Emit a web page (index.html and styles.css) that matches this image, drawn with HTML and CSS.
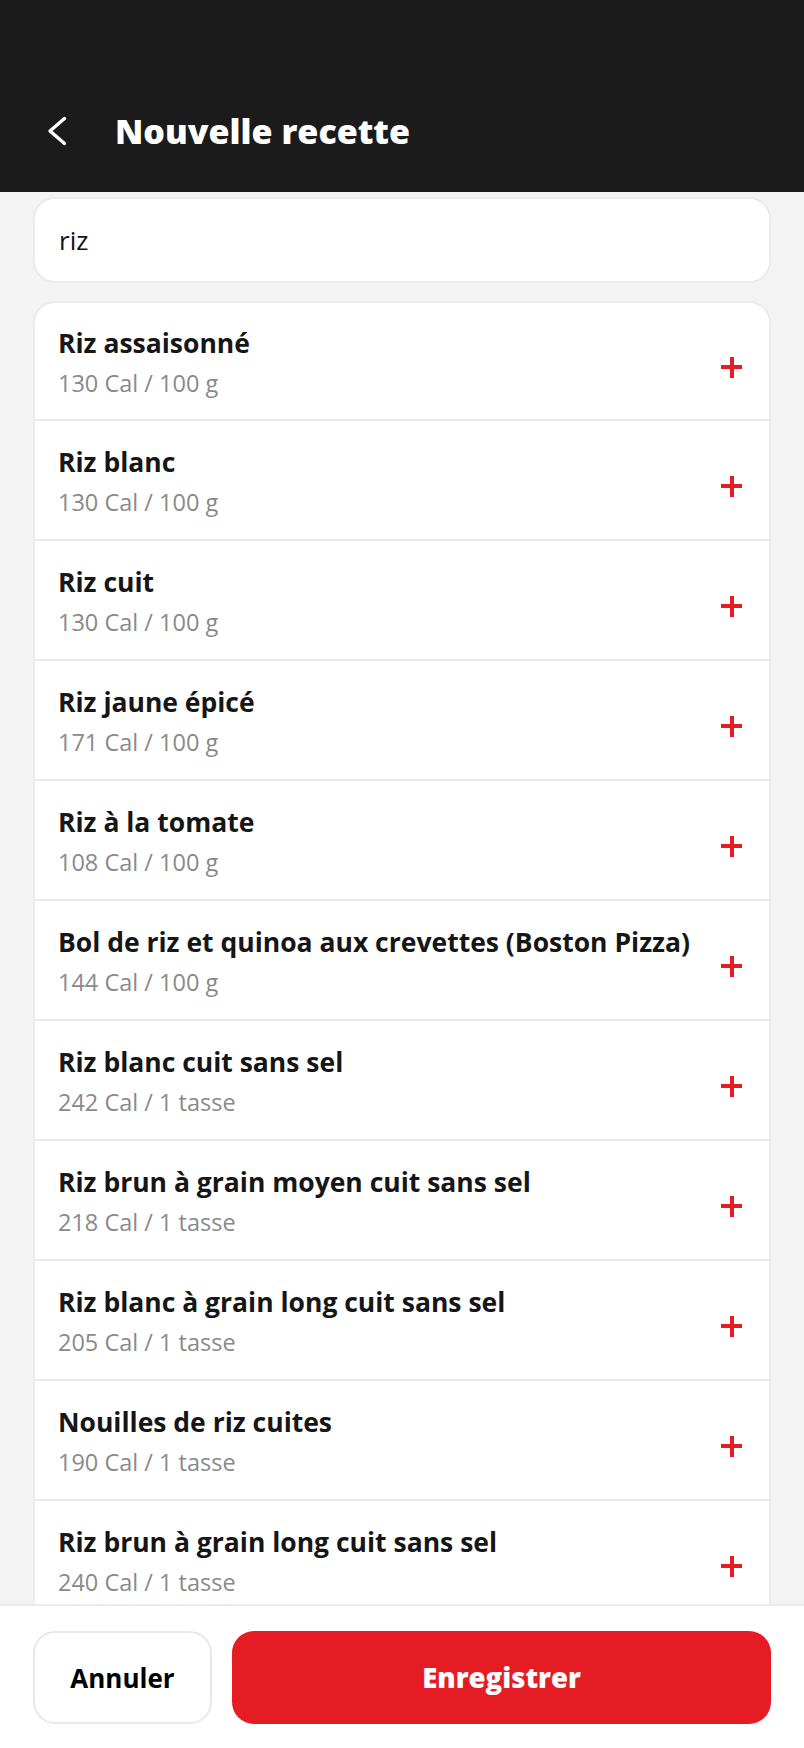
FILE: index.html
```html
<!DOCTYPE html>
<html lang="fr">
<head>
<meta charset="utf-8">
<title>Nouvelle recette</title>
<link rel="stylesheet" href="styles.css">
</head>
<body>
<div class="app">
  <header class="topbar">
    <svg class="back" width="22" height="32" viewBox="0 0 22 32" aria-hidden="true">
      <path d="M18.5 3.5 L4 16 L18.5 28.5" fill="none" stroke="#ffffff" stroke-width="3.4" stroke-linecap="round" stroke-linejoin="round"/>
    </svg>
    <h1 class="title">Nouvelle recette</h1>
  </header>

  <main class="content">
    <div class="search">riz</div>

    <ul class="results">
      <li class="row"><div class="info"><div class="name">Riz assaisonné</div><div class="meta">130 Cal / 100 g</div></div><span class="add" aria-label="Ajouter"></span></li>
      <li class="row"><div class="info"><div class="name">Riz blanc</div><div class="meta">130 Cal / 100 g</div></div><span class="add" aria-label="Ajouter"></span></li>
      <li class="row"><div class="info"><div class="name">Riz cuit</div><div class="meta">130 Cal / 100 g</div></div><span class="add" aria-label="Ajouter"></span></li>
      <li class="row"><div class="info"><div class="name">Riz jaune épicé</div><div class="meta">171 Cal / 100 g</div></div><span class="add" aria-label="Ajouter"></span></li>
      <li class="row"><div class="info"><div class="name">Riz à la tomate</div><div class="meta">108 Cal / 100 g</div></div><span class="add" aria-label="Ajouter"></span></li>
      <li class="row"><div class="info"><div class="name">Bol de riz et quinoa aux crevettes (Boston Pizza)</div><div class="meta">144 Cal / 100 g</div></div><span class="add" aria-label="Ajouter"></span></li>
      <li class="row"><div class="info"><div class="name">Riz blanc cuit sans sel</div><div class="meta">242 Cal / 1 tasse</div></div><span class="add" aria-label="Ajouter"></span></li>
      <li class="row"><div class="info"><div class="name">Riz brun à grain moyen cuit sans sel</div><div class="meta">218 Cal / 1 tasse</div></div><span class="add" aria-label="Ajouter"></span></li>
      <li class="row"><div class="info"><div class="name">Riz blanc à grain long cuit sans sel</div><div class="meta">205 Cal / 1 tasse</div></div><span class="add" aria-label="Ajouter"></span></li>
      <li class="row"><div class="info"><div class="name">Nouilles de riz cuites</div><div class="meta">190 Cal / 1 tasse</div></div><span class="add" aria-label="Ajouter"></span></li>
      <li class="row"><div class="info"><div class="name">Riz brun à grain long cuit sans sel</div><div class="meta">240 Cal / 1 tasse</div></div><span class="add" aria-label="Ajouter"></span></li>
    </ul>
  </main>

  <footer class="actions">
    <button class="btn btn-cancel" type="button">Annuler</button>
    <button class="btn btn-save" type="button">Enregistrer</button>
  </footer>
</div>
</body>
</html>
```

FILE: styles.css
```css
* {
  box-sizing: border-box;
}

html, body {
  margin: 0;
  padding: 0;
  height: 100%;
}

body {
  font-family: "Open Sans", "Noto Sans", "DejaVu Sans", sans-serif;
  background: #f3f3f3;
  color: #161616;
  overflow: hidden;
}

.app {
  height: 100vh;
  display: flex;
  flex-direction: column;
}

.topbar {
  flex: 0 0 192px;
  background: #1b1b1b;
  padding-top: 70px;
  display: flex;
  align-items: center;
}

.back {
  margin-left: 46px;
  flex: 0 0 auto;
}

.title {
  margin: 0 0 0 47px;
  color: #ffffff;
  font-size: 34px;
  font-weight: 800;
  line-height: 42px;
  letter-spacing: 0;
}

.content {
  flex: 1 1 auto;
  overflow: hidden;
  padding: 5px 33px 0 33px;
}

.search {
  height: 86px;
  background: #ffffff;
  border: 2px solid #ebebeb;
  border-radius: 22px;
  padding: 0 24px;
  display: flex;
  align-items: center;
  font-size: 26px;
  color: #111111;
}

.results {
  list-style: none;
  margin: 18px 0 0 0;
  padding: 0;
  background: #ffffff;
  border: 2px solid #ebebeb;
  border-bottom: none;
  border-radius: 22px 22px 0 0;
}

.row {
  min-height: 120px;
  display: flex;
  align-items: center;
  padding: 0 27px 0 23px;
  border-bottom: 2px solid #ebebeb;
}

.row:first-child {
  min-height: 118px;
}

.info {
  flex: 1 1 auto;
  display: flex;
  flex-direction: column;
  gap: 6px;
}

.name {
  font-size: 26.5px;
  font-weight: 700;
  line-height: 36px;
  color: #161616;
  margin-top: 2px;
}

.meta {
  font-size: 23.5px;
  line-height: 32px;
  color: #8a8a8a;
}

.add {
  flex: 0 0 21px;
  width: 21px;
  height: 21px;
  margin-top: 12px;
  position: relative;
}

.add::before,
.add::after {
  content: "";
  position: absolute;
  background: #e51c24;
}

.add::before {
  left: 0;
  right: 0;
  top: 8.5px;
  height: 4px;
}

.add::after {
  top: 0;
  bottom: 0;
  left: 8.5px;
  width: 4px;
}

.actions {
  flex: 0 0 auto;
  background: #ffffff;
  border-top: 2px solid #ebebeb;
  padding: 25px 33px 24px 33px;
  display: flex;
  gap: 20px;
}

.btn {
  height: 93px;
  border-radius: 22px;
  font-family: inherit;
  font-size: 26px;
  font-weight: 700;
  cursor: pointer;
}

.btn-cancel {
  flex: 0 0 179px;
  background: #ffffff;
  border: 2px solid #e8e8e8;
  color: #000000;
}

.btn-save {
  flex: 1 1 auto;
  background: #e51c24;
  border: none;
  color: #ffffff;
  font-size: 27.5px;
  font-weight: 800;
}
```
